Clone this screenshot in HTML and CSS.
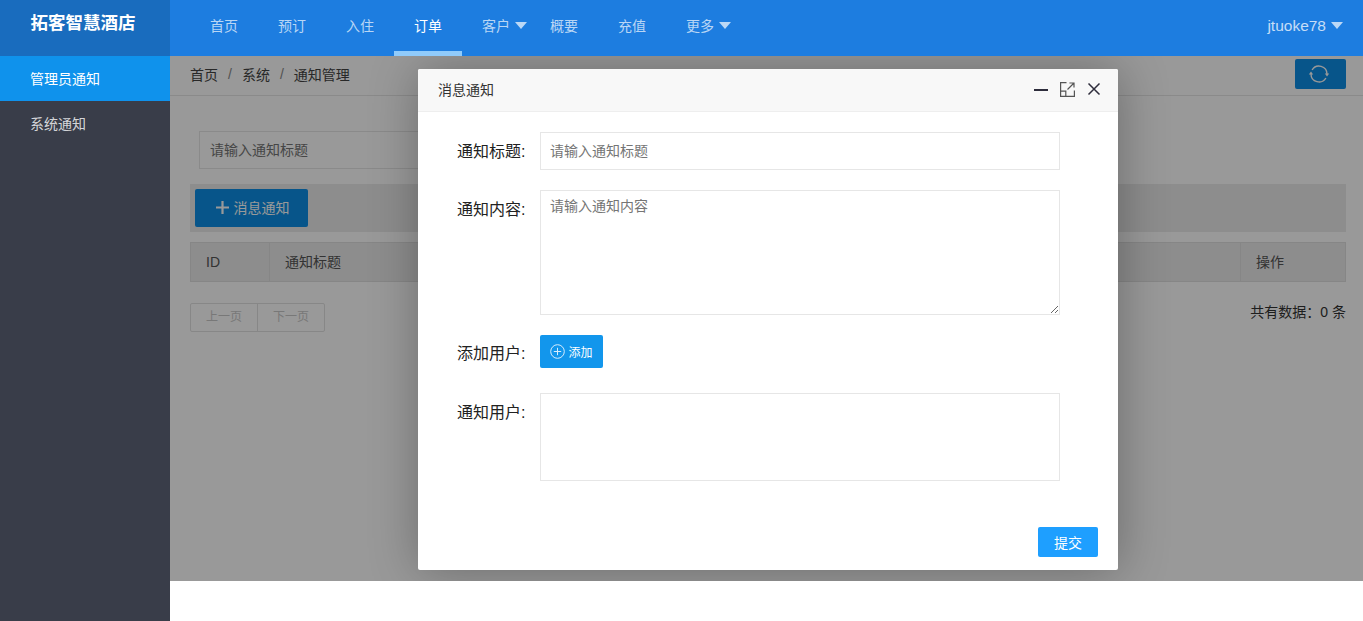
FILE: index.html
```html
<!DOCTYPE html>
<html lang="zh-CN">
<head>
  <meta charset="UTF-8" />
  <title>拓客智慧酒店 - 通知管理</title>
  <link rel="stylesheet" href="styles.css">
</head>
<body>

  <!-- Top Bar -->
  <div class="topbar">
    <div class="logo">拓客智慧酒店</div>
    <div class="nav">
      <a class="nav-item">首页</a>
      <a class="nav-item">预订</a>
      <a class="nav-item">入住</a>
      <a class="nav-item active">订单</a>
      <a class="nav-item">客户<i class="caret"></i></a>
      <a class="nav-item">概要</a>
      <a class="nav-item">充值</a>
      <a class="nav-item">更多<i class="caret"></i></a>
    </div>
    <div class="user">jtuoke78<i class="caret"></i></div>
  </div>

  <div class="main">
    <!-- Side Menu -->
    <div class="sidebar">
      <a class="side-item active">管理员通知</a>
      <a class="side-item">系统通知</a>
    </div>

    <!-- Page Content -->
    <div class="content">
      <div class="crumbs">
        <span>首页</span><em>/</em><span>系统</span><em>/</em><span>通知管理</span>
        <button class="refresh">
          <svg width="22" height="22" viewBox="0 0 22 22" fill="none" stroke="#fff" stroke-width="1.4">
            <path d="M4.1 7A8 8 0 0 1 19 11" />
            <path d="M17.9 15A8 8 0 0 1 3 11" />
            <path d="M16.8 10.5h4.4L19 13.5z" fill="#fff" stroke="none" />
            <path d="M.8 11.5h4.4L3 8.5z" fill="#fff" stroke="none" />
          </svg>
        </button>
      </div>

      <div class="search">
        <input class="search-input" type="text" placeholder="请输入通知标题" />
      </div>

      <div class="toolbar">
        <button class="add-btn">
          <svg width="13" height="13" viewBox="0 0 13 13" fill="none" stroke="#fff" stroke-width="2.2">
            <path d="M6.5 0v13M0 6.5h13" />
          </svg>
          消息通知
        </button>
      </div>

      <div class="table-head">
        <div class="col-id">ID</div>
        <div class="col-title">通知标题</div>
        <div class="col-op">操作</div>
      </div>

      <div class="pager-row">
        <div class="pager">
          <span>上一页</span>
          <span>下一页</span>
        </div>
        <div class="total">共有数据：0 条</div>
      </div>

      <div class="shade"></div>

      <!-- Notice Dialog -->
      <div class="modal">
        <div class="modal-title">
          <span>消息通知</span>
          <div class="modal-icons">
            <svg width="14" height="14" viewBox="0 0 14 14" fill="none" stroke="#2e2d3c" stroke-width="2">
              <path d="M0 8h14" />
            </svg>
            <svg width="15" height="15" viewBox="0 0 15 15" fill="none" stroke="#555" stroke-width="1.2">
              <path d="M6.5 .6H.6V14.4H14.4V8.5" />
              <path d="M.6 9.2h5.2v5.2" />
              <path d="M7.5 7.5l6-6M9.4 1h4.6v4.6" />
            </svg>
            <svg width="14" height="14" viewBox="0 0 14 14" fill="none" stroke="#2e2d3c" stroke-width="1.5">
              <path d="M1.5 1.5l11 11M12.5 1.5l-11 11" />
            </svg>
          </div>
        </div>

        <div class="modal-body">
          <div class="form-row">
            <label class="form-label">通知标题:</label>
            <input class="form-input" type="text" placeholder="请输入通知标题" />
          </div>
          <div class="form-row">
            <label class="form-label">通知内容:</label>
            <textarea class="form-area" placeholder="请输入通知内容"></textarea>
          </div>
          <div class="form-row row-add">
            <label class="form-label label-add">添加用户:</label>
            <button class="user-btn">
              <svg width="15" height="15" viewBox="0 0 15 15" fill="none" stroke="#d8edfd" stroke-width="1">
                <circle cx="7.5" cy="7.5" r="6.8" />
                <path d="M7.5 3.8v7.4M3.8 7.5h7.4" />
              </svg>
              添加
            </button>
          </div>
          <div class="form-row">
            <label class="form-label">通知用户:</label>
            <div class="user-box"></div>
          </div>
        </div>

        <div class="modal-foot">
          <button class="submit">提交</button>
        </div>
      </div>
    </div>
  </div>

</body>
</html>
```

FILE: styles.css
```css
* {
  box-sizing: border-box;
}

body {
  margin: 0;
  height: 621px;
  overflow: hidden;
  background: #fff;
  color: #333;
  font-family: "Liberation Sans", "Noto Sans CJK SC", sans-serif;
  font-size: 14px;
}

button {
  font-family: inherit;
  cursor: pointer;
}

.topbar {
  display: flex;
  height: 56px;
  background: #1d7de0;
}

.logo {
  width: 170px;
  height: 56px;
  padding: 10px 4px 0 0;
  background: #196cbe;
  color: #fff;
  font-size: 17.5px;
  font-weight: bold;
  line-height: 26px;
  text-align: center;
}

.nav {
  display: flex;
  flex: 1;
  padding-left: 20px;
}

.nav-item {
  display: flex;
  align-items: center;
  height: 56px;
  padding: 0 20px 1px;
  border-bottom: 5px solid transparent;
  color: rgba(255, 255, 255, 0.7);
  font-size: 14px;
}

.nav-item.active {
  color: #fff;
  border-bottom-color: #90cbfb;
}

.caret {
  display: inline-block;
  width: 0;
  height: 0;
  margin-left: 5px;
  border-left: 6px solid transparent;
  border-right: 6px solid transparent;
  border-top: 7px solid rgba(255, 255, 255, 0.7);
}

.nav-item .caret {
  margin-right: -17px;
}

.user {
  display: flex;
  align-items: center;
  padding-right: 20px;
  padding-bottom: 5px;
  color: rgba(255, 255, 255, 0.75);
  font-size: 15.5px;
}

.main {
  display: flex;
  height: 565px;
}

.sidebar {
  width: 170px;
  background: #393d49;
}

.side-item {
  display: block;
  height: 45px;
  padding-left: 30px;
  color: rgba(255, 255, 255, 0.8);
  font-size: 14px;
  line-height: 47px;
}

.side-item.active {
  background: #0f92ec;
  color: #fff;
}

.content {
  position: relative;
  flex: 1;
  height: 525px;
  padding: 0 17px 0 20px;
  overflow: hidden;
}

.crumbs {
  display: flex;
  align-items: center;
  height: 40px;
  margin: 0 -17px 0 -20px;
  padding: 0 17px 3px 20px;
  border-bottom: 1px solid #e6e6e6;
  color: #444;
}

.crumbs em {
  margin: 0 10px;
  color: #888;
  font-style: normal;
}

.refresh {
  display: flex;
  align-items: center;
  justify-content: center;
  width: 51px;
  height: 30px;
  margin-left: auto;
  padding: 0 3px 0 0;
  border: 0;
  border-radius: 2px;
  background: #0d8ee6;
}

.search {
  padding: 35px 0 0 9px;
}

.search-input {
  display: block;
  width: 300px;
  height: 38px;
  padding: 0 10px;
  border: 1px solid #e6e6e6;
  background: #fff;
  font: inherit;
}

.search-input::placeholder,
.form-input::placeholder,
.form-area::placeholder {
  color: #757575;
  opacity: 1;
}

.toolbar {
  height: 48px;
  margin-top: 15px;
  padding: 5px;
  background: #ececec;
}

.add-btn {
  display: flex;
  align-items: center;
  justify-content: center;
  gap: 5px;
  width: 113px;
  height: 38px;
  padding: 0 0 2px 2px;
  border: 0;
  border-radius: 2px;
  background: #0d8ee6;
  color: #fff;
  font-size: 14px;
}

.table-head {
  display: flex;
  align-items: center;
  height: 40px;
  margin-top: 10px;
  background: #ececec;
  border: 1px solid #e0e0e0;
  color: #555;
}

.col-id {
  width: 79px;
  height: 38px;
  padding-left: 15px;
  border-right: 1px solid #e0e0e0;
  line-height: 39px;
}

.col-title {
  flex: 1;
  padding-left: 15px;
  padding-bottom: 2px;
}

.col-op {
  width: 105px;
  height: 38px;
  padding-left: 15px;
  border-left: 1px solid #e0e0e0;
  line-height: 39px;
}

.pager-row {
  display: flex;
  justify-content: space-between;
  margin-top: 21px;
}

.pager {
  display: flex;
  height: 29px;
  border: 1px solid #e2e2e2;
  border-radius: 2px;
  color: #c9c9c9;
  font-size: 12px;
  line-height: 27px;
}

.pager span {
  width: 66px;
  text-align: center;
}

.pager span + span {
  width: 67px;
  border-left: 1px solid #e2e2e2;
}

.total {
  color: #333;
  font-size: 14px;
  line-height: 18px;
}

.shade {
  position: absolute;
  inset: 0;
  background: rgba(0, 0, 0, 0.4);
}

.modal {
  position: absolute;
  left: 248px;
  top: 13px;
  display: flex;
  flex-direction: column;
  width: 700px;
  height: 501px;
  background: #fff;
  border-radius: 2px;
  box-shadow: 1px 1px 50px rgba(0, 0, 0, 0.3);
}

.modal-title {
  display: flex;
  align-items: center;
  justify-content: space-between;
  height: 43px;
  padding: 0 17px 2px 20px;
  background: #f8f8f8;
  border-bottom: 1px solid #eee;
  border-radius: 2px 2px 0 0;
  font-size: 14px;
}

.modal-icons {
  display: flex;
  align-items: center;
  gap: 12px;
}

.modal-body {
  padding: 20px 0 0 39px;
}

.form-row {
  display: flex;
  align-items: flex-start;
  margin-bottom: 20px;
}

.row-add {
  margin-bottom: 25px;
}

.form-label {
  width: 83px;
  height: 38px;
  color: #222;
  font-size: 16px;
  line-height: 40px;
}

.label-add {
  height: 33px;
  line-height: 38px;
}

.form-input {
  width: 520px;
  height: 38px;
  padding: 0 9px;
  border: 1px solid #e6e6e6;
  font: inherit;
  outline: none;
}

.form-area {
  display: block;
  width: 520px;
  height: 125px;
  padding: 5px 9px;
  border: 1px solid #e6e6e6;
  font: inherit;
  line-height: 20px;
  outline: none;
}

.user-btn {
  display: flex;
  align-items: center;
  justify-content: center;
  gap: 3px;
  width: 63px;
  height: 33px;
  padding: 0;
  border: 0;
  border-radius: 2px;
  background: #1296ec;
  color: #fff;
  font-size: 12px;
}

.user-box {
  width: 520px;
  height: 88px;
  border: 1px solid #e6e6e6;
}

.modal-foot {
  display: flex;
  justify-content: flex-end;
  margin-top: auto;
  padding: 0 20px 13px 0;
}

.submit {
  width: 60px;
  height: 30px;
  padding: 0;
  border: 0;
  border-radius: 2px;
  background: #1e9fff;
  color: #fff;
  font-size: 14px;
}
```
